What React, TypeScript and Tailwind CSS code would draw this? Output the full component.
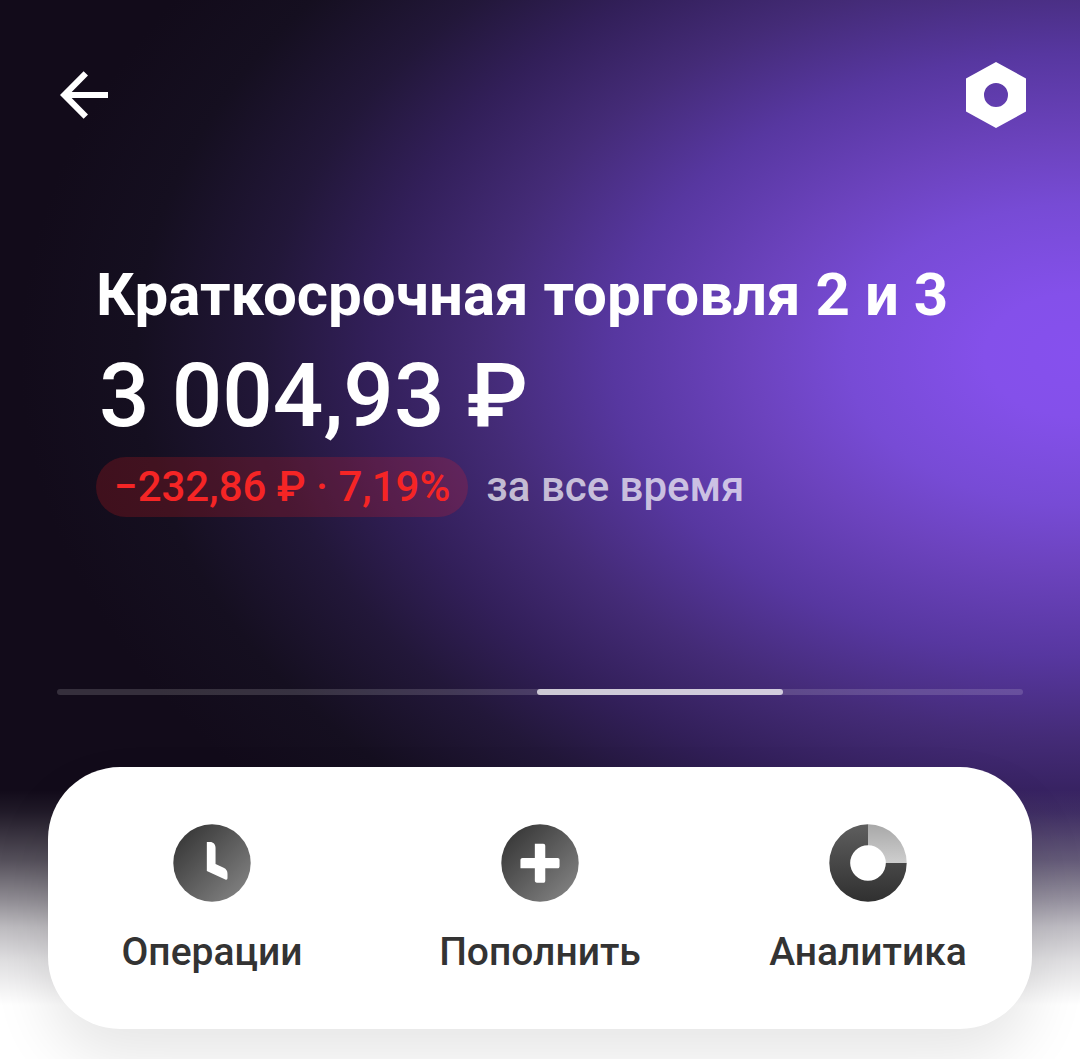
import type { ReactNode } from 'react'

interface Action {
  label: string
  icon: ReactNode
}

function BackIcon() {
  return (
    <svg viewBox="0 0 48 48" className="h-12 w-12" aria-hidden="true">
      <path d="M25.8 2.4 4.3 24l21.5 21.6M4.3 24H48" fill="none" stroke="white" strokeWidth="6.2" />
    </svg>
  )
}

function SettingsIcon() {
  return (
    <svg viewBox="0 0 60 66" className="h-[66px] w-[60px]" aria-hidden="true">
      <path
        fill="white"
        fillRule="evenodd"
        d="M30 0 60 16.5v33L30 66 0 49.5v-33zM30 21a12 12 0 1 0 0 24 12 12 0 0 0 0-24z"
      />
    </svg>
  )
}

function ClockIcon() {
  return (
    <svg viewBox="0 0 77 77" className="h-[78px] w-[78px]" aria-hidden="true">
      <defs>
        <linearGradient id="clock-fill" x1="0.15" y1="0.15" x2="0.85" y2="0.85">
          <stop offset="0" stopColor="#3c3c3c" />
          <stop offset="1" stopColor="#7c7c7c" />
        </linearGradient>
      </defs>
      <circle cx="38.5" cy="38.5" r="38.2" fill="url(#clock-fill)" />
      <path fill="white" d="M33.4 17.8h3.2c3.2 0 5.4 2.4 5.4 5.6v16l8 3.8c2.6 1.3 3.8 3.1 3.8 5.8v4c0 1.7-.7 2.4-2.2 1.7L33.4 46.4z" />
    </svg>
  )
}

function PlusIcon() {
  return (
    <svg viewBox="0 0 77 77" className="h-[78px] w-[78px]" aria-hidden="true">
      <defs>
        <linearGradient id="plus-fill" x1="0.15" y1="0.15" x2="0.85" y2="0.85">
          <stop offset="0" stopColor="#3c3c3c" />
          <stop offset="1" stopColor="#7c7c7c" />
        </linearGradient>
      </defs>
      <circle cx="38.5" cy="38.5" r="38.2" fill="url(#plus-fill)" />
      <path
        fill="white"
        d="M33.4 19.6h8.2c1.4 0 2.1.8 2.1 2.1v11.8h12.2c1.3 0 1.9.8 1.9 2v6.2c0 1.3-.7 2-1.9 2H43.7v12.2c0 1.3-.7 2-2 2h-6.2c-1.4 0-2.1-.8-2.1-2.1V43.7H19.2v-8c0-1.4.8-2.2 2.2-2.2h12z"
      />
    </svg>
  )
}

function ChartIcon() {
  return (
    <svg viewBox="0 0 77 77" className="h-[78px] w-[78px]" aria-hidden="true">
      <defs>
        <linearGradient id="ring-dark" x1="0" y1="0" x2="0" y2="1">
          <stop offset="0" stopColor="#5e5e5e" />
          <stop offset="1" stopColor="#303030" />
        </linearGradient>
        <linearGradient id="ring-light" x1="0" y1="0" x2="0" y2="1">
          <stop offset="0" stopColor="#a8a8a8" />
          <stop offset="1" stopColor="#cecece" />
        </linearGradient>
      </defs>
      <path fill="url(#ring-dark)" d="M38.5 .3a38.2 38.2 0 1 0 38.2 38.2H56.1a17.6 17.6 0 1 1-17.6-17.6z" />
      <path fill="url(#ring-light)" d="M38.5 .3A38.2 38.2 0 0 1 76.7 38.5H56.1a17.6 17.6 0 0 0-17.6-17.6z" />
    </svg>
  )
}

const actions: Action[] = [
  { label: 'Операции', icon: <ClockIcon /> },
  { label: 'Пополнить', icon: <PlusIcon /> },
  { label: 'Аналитика', icon: <ChartIcon /> },
]

// Position of the visible account inside the carousel, in percent
const pager = { start: 49.7, size: 25.5 }

export default function App() {
  return (
    <main className="min-h-screen overflow-hidden bg-[linear-gradient(to_bottom,transparent_790px,#ffffff10_812px,#ffffff48_860px,#ffffff88_900px,#ffffffb8_927px,#ffffffdd_960px,#fff_1005px),radial-gradient(1060px_685px_at_100%_355px,#8650ee_0%,#8450ea_9%,#774bd5_22%,#6c43be_31%,#5737a0_44%,#442b77_56%,#321f59_67%,#221739_77%,#150f20_89%,#120b1a_100%)] pb-[30px] font-['Roboto',sans-serif]">
      <header className="flex items-center justify-between pt-[62px] pr-[54px] pl-[60px]">
        <button type="button" aria-label="Назад">
          <BackIcon />
        </button>
        <button type="button" aria-label="Настройки">
          <SettingsIcon />
        </button>
      </header>

      <section className="mt-[131px] px-24 whitespace-nowrap">
        <h1 className="text-[60px] leading-[72px] font-bold text-white">Краткосрочная торговля 2 и 3</h1>
        <p className="mt-[13px] pl-[3px] text-[89px] leading-[104px] font-medium text-white">3 004,93 ₽</p>
        <div className="mt-[9px] flex items-center gap-[18px] text-[42px] leading-[60px] font-medium">
          <span className="rounded-full bg-[#ff202030] px-[18px] text-[#f52525]">−232,86 ₽ · 7,19%</span>
          <span className="text-[#ffffffb3]">за все время</span>
        </div>
      </section>

      <div className="mx-[57px] mt-[172px] h-[6px] rounded-full bg-[#ffffff26]">
        <div
          className="h-full rounded-full bg-[#ffffffb8]"
          style={{ marginLeft: `${pager.start}%`, width: `${pager.size}%` }}
        />
      </div>

      <nav className="mx-12 mt-[72px] grid grid-cols-3 rounded-[72px] bg-white pt-[57px] pb-[53px] shadow-[0_30px_60px_#00000019]">
        {actions.map((action) => (
          <button key={action.label} type="button" className="flex flex-col items-center gap-[26px]">
            {action.icon}
            <span className="text-[39px] leading-[48px] font-medium text-[#333]">{action.label}</span>
          </button>
        ))}
      </nav>
    </main>
  )
}
